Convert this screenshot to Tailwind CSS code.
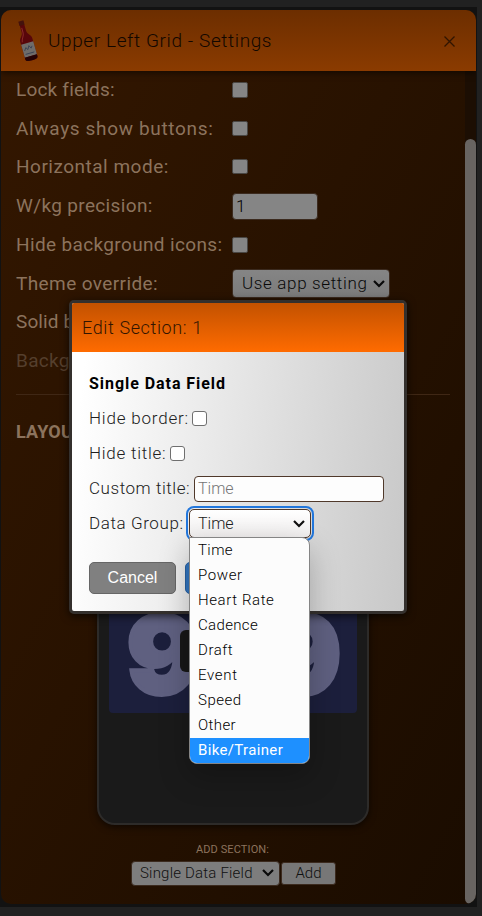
<!DOCTYPE html>
<html lang="en">
<head>
<meta charset="utf-8">
<title>Upper Left Grid - Settings</title>
<script src="https://cdn.jsdelivr.net/npm/@tailwindcss/browser@4"></script>
</head>
<body class="w-[482px] h-[916px] overflow-hidden bg-[#212121] pt-[7px] font-['Roboto',sans-serif]">
<div class="w-[477px] h-[900px] bg-[#121212] pt-[3px] pl-px">
  <main class="relative w-[475px] h-[894px] rounded-[10px] overflow-hidden bg-linear-to-br from-[#341700] to-[#1a0c00] flex flex-col">
    <header class="relative z-10 h-[61px] shrink-0 bg-linear-to-b from-[#6c2e00] to-[#8b3b00] shadow-[0_2px_6px_rgba(0,0,0,0.5)] flex items-center pl-[14px] pr-[20px]">
      <svg class="w-[24px] h-[44px] shrink-0" viewBox="0 0 24 44">
        <g transform="rotate(-16 12 22)">
          <path d="M9.300 2h4.600v10c0 4 4 5 4 9v18c0 2-1.300 2.800-6.300 2.800S5.300 41 5.300 39V21c0-4 4-5 4-9z" fill="#58060a"/>
          <path d="M9 1h5.200v4.500H9z" fill="#44120c"/>
          <path d="M10.500 8v5c0 4-3.200 5-3.400 9" stroke="#8a2a28" fill="none"/>
          <path d="M5.300 24h12.600v13.500H5.300z" fill="#6f6c6a"/>
          <path d="M7 31l2-3 1.500 2.500 2-3.500 1.500 3 1.500-2M7 34.500h9" stroke="#3c4356" stroke-width=".9" fill="none"/>
          <path d="M5.300 37.500h12.600V39c0 2-1.300 2.800-6.300 2.800S5.300 41 5.300 39z" fill="#240306"/>
        </g>
      </svg>
      <h1 class="ml-[9px] text-[19px] leading-6 font-light tracking-[0.6px] text-[#120700] whitespace-nowrap">Upper Left Grid - Settings</h1>
      <svg class="ml-auto w-[13px] h-[13px] mt-[2px]" viewBox="0 0 13 13"><path d="M1.500 1.500l10 10M11.500 1.500l-10 10" stroke="#301400" stroke-width="1.300"/></svg>
    </header>
    <div class="flex grow">
      <section class="w-[464px] pl-[15px] pr-[15px] text-[19px] text-[#8c735d]">
        <div class="grid grid-cols-[216px_1fr] auto-rows-[38.700px] items-center whitespace-nowrap">
          <span class="tracking-[0.2px]">Lock fields:</span><i class="w-[16px] h-[16px] rounded-[2px] bg-[#858585] border border-[#494643] -mt-px"></i>
          <span class="tracking-[0.66px]">Always show buttons:</span><i class="w-[16px] h-[15px] rounded-[2px] bg-[#858585] border border-[#494643] -mt-[2px]"></i>
          <span class="tracking-[0.5px]">Horizontal mode:</span><i class="w-[16px] h-[15px] rounded-[2px] bg-[#858585] border border-[#494643] -mt-[2px]"></i>
          <span class="tracking-[0.35px]">W/kg precision:</span><span class="w-[86px] h-[27px] rounded-[4px] bg-[#858585] border border-[#3b2a1e] pl-[3px] text-black text-[17px] leading-[25px] font-light">1</span>
          <span class="tracking-[0.36px]">Hide background icons:</span><i class="w-[16px] h-[16px] rounded-[2px] bg-[#858585] border border-[#494643] -mt-px"></i>
          <span class="tracking-[0.4px]">Theme override:</span>
          <span class="w-[158px] h-[29px] rounded-[4px] bg-linear-to-b from-[#858585] to-[#7b7b7b] border border-[#3b2a1e] pl-[9px] pr-[4px] text-[#090909] text-[17px] font-light tracking-[0.65px] flex items-center justify-between">Use app setting<svg class="w-[12px] h-[8px]" viewBox="0 0 12 8"><path d="M1 1l5 5 5-5" fill="none" stroke="#090909" stroke-width="2.200"/></svg></span>
          <span class="tracking-[0.1px]">Solid background:</span><i></i>
          <span class="tracking-[0.3px] text-[#553f2d]">Background color:</span><i></i>
        </div>
        <hr class="border-0 h-px bg-[#3f2715] mt-[13px]">
        <h2 class="mt-[22px] text-[18px] leading-[30px] font-bold tracking-[0.2px]">LAYOUT</h2>
        <div class="ml-[81px] mt-[24px] w-[272px] h-[354px] rounded-[18px] border-2 border-[#2d2b29] bg-[#1a1a1a] shadow-[0_2px_7px_rgba(0,0,0,0.6)] px-[10px] pt-[10px]">
          <div class="relative h-[230px] rounded-[4px] bg-[#1c1f3c] overflow-hidden flex items-end justify-center">
            <span class="font-['Inter',sans-serif] font-black text-[108px] leading-[116px] tracking-[-2px] text-[#5f6080] [-webkit-text-stroke:4px_#5f6080]">999</span>
            <i class="absolute left-[71px] top-[147px] w-[110px] h-[42px] rounded-[6px] bg-[#171717]"></i>
          </div>
        </div>
        <div class="mt-[17px] pr-px text-center text-[11px] leading-4 tracking-[0.12px]">ADD SECTION:</div>
        <div class="mt-[3px] pl-[115px] flex items-center gap-px text-[15px] font-light text-[#101010] whitespace-nowrap">
          <span class="w-[149px] h-[25px] rounded-[4px] bg-[#7d7d7d] border border-[#3b2a1e] pl-[8px] pr-[5px] tracking-[0.2px] flex items-center justify-between">Single Data Field<svg class="w-[12px] h-[8px]" viewBox="0 0 12 8"><path d="M1 1l5 5 5-5" fill="none" stroke="#090909" stroke-width="2.200"/></svg></span>
          <span class="w-[55px] h-[23px] rounded-[3px] bg-[#777] border border-[#3b2a1e] flex items-center justify-center">Add</span>
        </div>
      </section>
      <aside class="w-[11px] pt-[68px] bg-[#1c0e03]"><div class="h-[765px] rounded-[6px] bg-[#686461]"></div></aside>
    </div>
  </main>
</div>

<section class="absolute left-[69px] top-[300px] w-[338px] h-[314px] rounded-[5px] border-3 border-[#34302d] shadow-[0_2px_9px_rgba(0,0,0,0.7)] overflow-hidden bg-linear-96 from-white from-5% to-[#c8c8c8] flex flex-col">
  <h2 class="h-[49px] shrink-0 bg-linear-to-b from-[#c35200] to-[#ff6b00] pl-[10px] text-[18px] leading-[49px] font-light tracking-[0.62px] text-[#321500]">Edit Section: 1</h2>
  <div class="pl-[17px] pt-[14px] text-[17px] font-light text-[#202020] whitespace-nowrap">
    <div class="h-[35px] flex items-center text-[16px] font-bold text-black tracking-[0.95px]">Single Data Field</div>
    <div class="h-[35px] flex items-center gap-[4px]"><span class="w-[99px] tracking-[0.8px]">Hide border:</span><i class="w-[15px] h-[15px] rounded-[3px] bg-white border border-[#6f6f6f]"></i></div>
    <div class="h-[35px] flex items-center gap-[4px]"><span class="w-[77px] tracking-[0.75px]">Hide title:</span><i class="w-[15px] h-[15px] rounded-[3px] bg-white border border-[#6f6f6f]"></i></div>
    <div class="h-[35px] flex items-center gap-[4px]"><span class="w-[101px] tracking-[0.55px]">Custom title:</span><span class="w-[190px] h-[26px] rounded-[4px] bg-[#fdfdfd] border border-[#50392b] pl-[3px] text-[16px] leading-[24px] text-[#757575]">Time</span></div>
    <div class="h-[35px] flex items-center gap-[4px]"><span class="w-[96px] tracking-[0.6px]">Data Group:</span><span class="w-[122px] h-[29px] rounded-[5px] bg-linear-to-b from-white to-[#f0eeee] border border-[#50392b] outline-2 outline-offset-1 outline-[#2176dc] pl-[8px] pr-[5px] text-[16px] flex items-center justify-between">Time<svg class="w-[12px] h-[8px]" viewBox="0 0 12 8"><path d="M1 1l5 5 5-5" fill="none" stroke="#101010" stroke-width="2.200"/></svg></span></div>
    <div class="mt-[21px] flex gap-[9px] font-['Liberation_Sans',sans-serif] font-normal text-[16px] text-white">
      <span class="w-[87px] h-[32px] rounded-[5px] bg-[#808080] border border-[#666] flex items-center justify-center">Cancel</span>
      <span class="w-[87px] h-[32px] rounded-[5px] bg-[#3275bf] border border-[#2860a0]"></span>
    </div>
  </div>
</section>

<ul class="absolute left-[189px] top-[538px] w-[121px] h-[227px] rounded-[8px] rounded-tl-none overflow-hidden border border-[#858585] bg-[#fcfcfc] shadow-[0_12px_30px_rgba(0,0,0,0.25)] text-[15px] leading-[25px] font-light text-[#000] *:pl-[8px] -mt-[1px] whitespace-nowrap">
  <li class="tracking-[0.4px]">Time</li><li class="tracking-[0.6px]">Power</li><li class="tracking-[0.6px]">Heart Rate</li><li class="tracking-[0.35px]">Cadence</li><li class="tracking-[0.55px]">Draft</li><li class="tracking-[0.7px]">Event</li><li class="tracking-[0.5px]">Speed</li><li class="tracking-[0.4px]">Other</li><li class="tracking-[0.35px] font-normal bg-[#1e90ff] text-white">Bike/Trainer</li>
</ul>
</body>
</html>
